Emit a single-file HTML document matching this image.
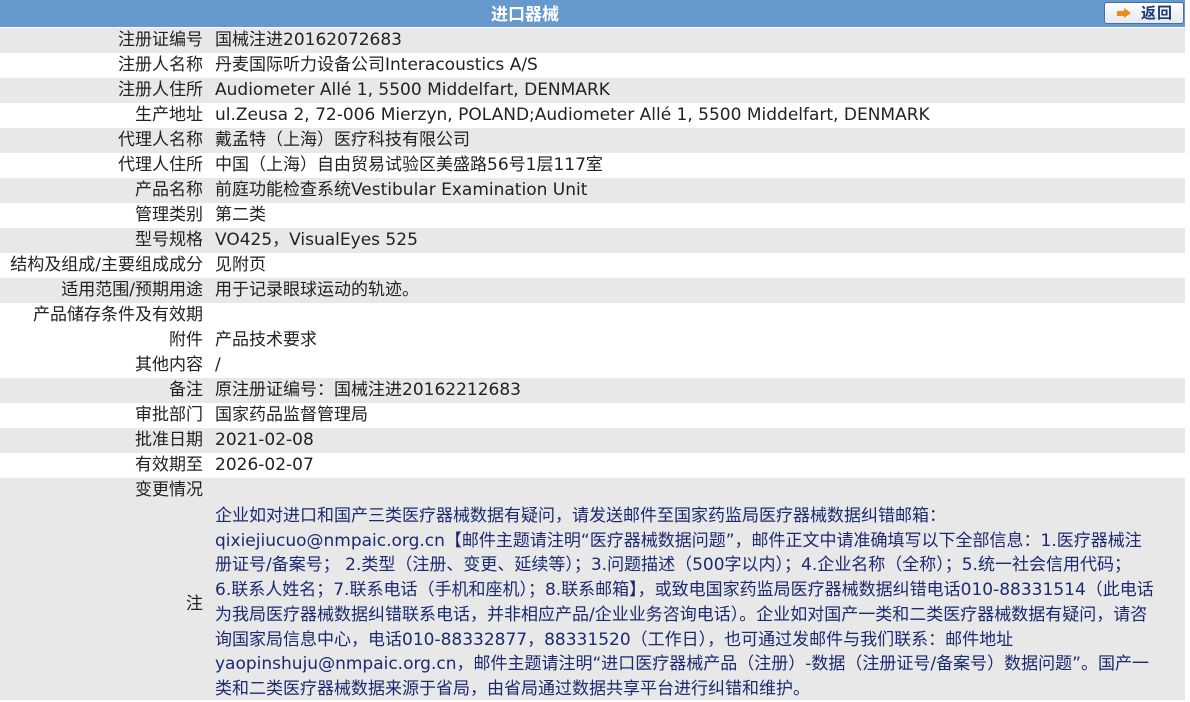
<!DOCTYPE html>
<html><head><meta charset="utf-8">
<style>
html,body{margin:0;padding:0;background:#fff;width:1190px;height:700px;overflow:hidden}
body{font-family:"DejaVu Sans","Noto Sans CJK SC",sans-serif;font-size:17px;color:#222}
.hd{position:absolute;left:0;top:0;width:1185px;height:27px;background:#6699cc;}
.hd .t{position:absolute;left:0;width:1050px;text-align:center;top:3px;color:#fff;font-weight:bold;font-size:17px;line-height:20px;font-family:"Noto Sans CJK SC",sans-serif}
.btn{position:absolute;left:1104px;top:2px;width:78px;height:20px;border:1px solid #4a6fa0;border-radius:3px;background:linear-gradient(#ffffff,#e4e8ee);}
.btn .ar{position:absolute;left:12px;top:8px;width:7px;height:5px;background:#f08a10}
.btn .ah{position:absolute;left:19px;top:5px;width:0;height:0;border-top:5.5px solid transparent;border-bottom:5.5px solid transparent;border-left:7px solid #f08a10}
.btn .tx{position:absolute;left:36px;top:1px;font-size:15px;font-weight:bold;color:#1a3a7a;line-height:18px;letter-spacing:1px;font-family:"Noto Sans CJK SC",sans-serif}
.r{position:absolute;left:0;width:1185px;height:25px;line-height:25px;white-space:nowrap}
.g{background:#e8e8e8}
.l{position:absolute;right:982px;top:0;text-align:right}
.v{position:absolute;left:215px;top:0}
.note{position:absolute;left:215px;top:504px;line-height:24.7px;color:#1c2a70;white-space:nowrap}
</style></head><body>
<div class="hd"><div class="t">进口器械</div>
<div class="btn"><div class="ar"></div><div class="ah"></div><div class="tx">返回</div></div></div>

<div class="r g" style="top:28px"><span class="l">注册证编号</span><span class="v">国械注进20162072683</span></div>
<div class="r" style="top:53px"><span class="l">注册人名称</span><span class="v">丹麦国际听力设备公司Interacoustics A/S</span></div>
<div class="r g" style="top:78px"><span class="l">注册人住所</span><span class="v">Audiometer Allé 1, 5500 Middelfart, DENMARK</span></div>
<div class="r" style="top:103px"><span class="l">生产地址</span><span class="v">ul.Zeusa 2, 72-006 Mierzyn, POLAND;Audiometer Allé 1, 5500 Middelfart, DENMARK</span></div>
<div class="r g" style="top:128px"><span class="l">代理人名称</span><span class="v">戴孟特（上海）医疗科技有限公司</span></div>
<div class="r" style="top:153px"><span class="l">代理人住所</span><span class="v">中国（上海）自由贸易试验区美盛路56号1层117室</span></div>
<div class="r g" style="top:178px"><span class="l">产品名称</span><span class="v">前庭功能检查系统Vestibular Examination Unit</span></div>
<div class="r" style="top:203px"><span class="l">管理类别</span><span class="v">第二类</span></div>
<div class="r g" style="top:228px"><span class="l">型号规格</span><span class="v">VO425，VisualEyes 525</span></div>
<div class="r" style="top:253px"><span class="l">结构及组成/主要组成成分</span><span class="v">见附页</span></div>
<div class="r g" style="top:278px"><span class="l">适用范围/预期用途</span><span class="v">用于记录眼球运动的轨迹。</span></div>
<div class="r" style="top:303px"><span class="l">产品储存条件及有效期</span></div>
<div class="r" style="top:328px"><span class="l">附件</span><span class="v">产品技术要求</span></div>
<div class="r" style="top:353px"><span class="l">其他内容</span><span class="v">/</span></div>
<div class="r g" style="top:378px"><span class="l">备注</span><span class="v">原注册证编号：国械注进20162212683</span></div>
<div class="r" style="top:403px"><span class="l">审批部门</span><span class="v">国家药品监督管理局</span></div>
<div class="r g" style="top:428px"><span class="l">批准日期</span><span class="v">2021-02-08</span></div>
<div class="r" style="top:453px"><span class="l">有效期至</span><span class="v">2026-02-07</span></div>
<div class="r g" style="top:478px;height:222px"><span class="l">变更情况</span><span class="l" style="top:114px">注</span></div>
<div class="note">企业如对进口和国产三类医疗器械数据有疑问，请发送邮件至国家药监局医疗器械数据纠错邮箱：<br>qixiejiucuo@nmpaic.org.cn【邮件主题请注明“医疗器械数据问题”，邮件正文中请准确填写以下全部信息：1.医疗器械注<br>册证号/备案号； 2.类型（注册、变更、延续等）；3.问题描述（500字以内）；4.企业名称（全称）；5.统一社会信用代码；<br>6.联系人姓名；7.联系电话（手机和座机）；8.联系邮箱】，或致电国家药监局医疗器械数据纠错电话010-88331514（此电话<br>为我局医疗器械数据纠错联系电话，并非相应产品/企业业务咨询电话）。企业如对国产一类和二类医疗器械数据有疑问，请咨<br>询国家局信息中心，电话010-88332877，88331520（工作日），也可通过发邮件与我们联系：邮件地址<br>yaopinshuju@nmpaic.org.cn，邮件主题请注明“进口医疗器械产品（注册）-数据（注册证号/备案号）数据问题”。国产一<br>类和二类医疗器械数据来源于省局，由省局通过数据共享平台进行纠错和维护。</div>
</body></html>
